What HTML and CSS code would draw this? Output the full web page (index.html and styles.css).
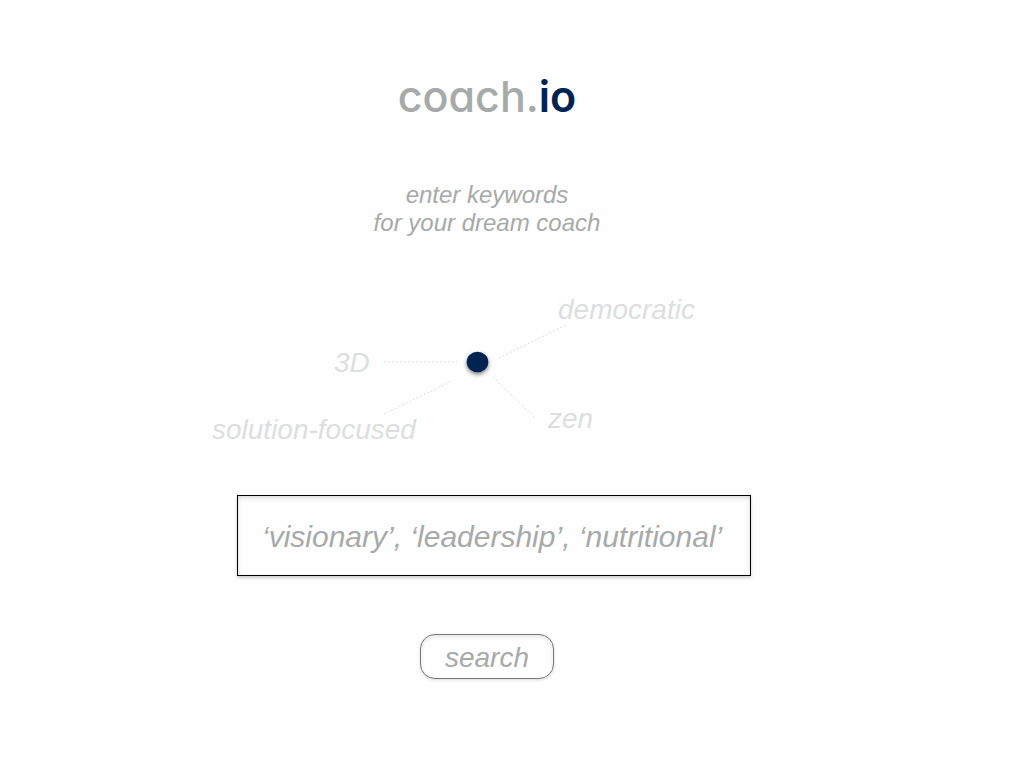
FILE: index.html
```
<!DOCTYPE html>
<html lang="en">
<head>
<meta charset="utf-8">
<meta name="viewport" content="width=device-width, initial-scale=1">
<title>coach.io</title>
<link rel="stylesheet" href="styles.css">
</head>
<body>
<main class="page">
  <h1 class="logo">coach.<span class="logo-accent">io</span></h1>
  <form class="search-form">
    <label class="prompt" for="keywords">enter keywords<br>for your dream coach</label>
    <div class="map">
      <svg class="map-lines" viewBox="0 0 600 160" aria-hidden="true">
        <g class="spokes">
          <path d="M197 72H270"/>
          <path d="M197 124L265 91"/>
          <path d="M312 68L379 35"/>
          <path d="M306 87L348 128"/>
        </g>
        <ellipse class="hub" cx="290.5" cy="72" rx="10.8" ry="10.3"/>
      </svg>
      <span class="keyword democratic">democratic</span>
      <span class="keyword three-d">3D</span>
      <span class="keyword solution">solution-focused</span>
      <span class="keyword zen">zen</span>
    </div>
    <input class="field" id="keywords" type="text" placeholder="‘visionary’, ‘leadership’, ‘nutritional’">
    <button class="submit" type="submit">search</button>
  </form>
</main>
</body>
</html>
```
FILE: styles.css
```
* { box-sizing: border-box; }
body {
  margin: 0;
  background: #fefefe;
  color: #a6aaa9;
  font-family: "Helvetica Neue", "Liberation Sans", Arial, sans-serif;
  font-style: italic;
}
.page {
  display: flex;
  flex-direction: column;
  align-items: center;
  padding: 64px 54px 64px 0;
}
.logo {
  margin: 0;
  font-family: "Comic Sans MS", Inter, sans-serif;
  font-feature-settings: "cv11";
  font-size: 43px;
  font-style: normal;
  font-weight: 500;
  line-height: 64px;
}
.logo-accent { color: #002452; font-weight: 600; }
.search-form {
  display: flex;
  flex-direction: column;
  align-items: center;
  margin-top: 53px;
}
.prompt {
  font-size: 24px;
  line-height: 28px;
  text-align: center;
}
.map {
  position: relative;
  width: 600px;
  height: 160px;
  margin-top: 53px;
}
.map-lines { display: block; width: 100%; height: 100%; }
.spokes {
  fill: none;
  stroke: #dcdddd;
  stroke-width: 1;
  stroke-dasharray: 2 2;
}
.hub { fill: #002452; filter: drop-shadow(0 2px 2px rgba(0, 0, 0, 0.5)); }
.keyword {
  position: absolute;
  color: #dcdedf;
  font-size: 28px;
  line-height: 32px;
  white-space: nowrap;
}
.democratic { left: 371px; top: 4px; }
.three-d { left: 147px; top: 57px; }
.solution { left: 25px; top: 124px; }
.zen { left: 361px; top: 113px; }
.field {
  width: 514px;
  max-width: 100%;
  height: 81px;
  margin: 45px 0 0 14px;
  padding: 2px 8px 0 24px;
  border: 1px solid #000;
  border-radius: 0;
  background: #fefefe;
  box-shadow: 0 2px 3px rgba(0, 0, 0, 0.2), inset 0 2px 4px rgba(0, 0, 0, 0.15);
  color: #a6aaa9;
  font: inherit;
  font-size: 30px;
}
.field::placeholder { color: #a6aaa9; opacity: 1; }
.submit {
  width: 134px;
  height: 45px;
  margin-top: 58px;
  padding: 2px 0 0;
  border: 1px solid #777;
  border-radius: 15px;
  background: #fefefe;
  box-shadow: 0 1px 3px rgba(0, 0, 0, 0.15), inset 0 2px 4px rgba(0, 0, 0, 0.1);
  color: #a6aaa9;
  font: inherit;
  font-size: 28px;
}
```
